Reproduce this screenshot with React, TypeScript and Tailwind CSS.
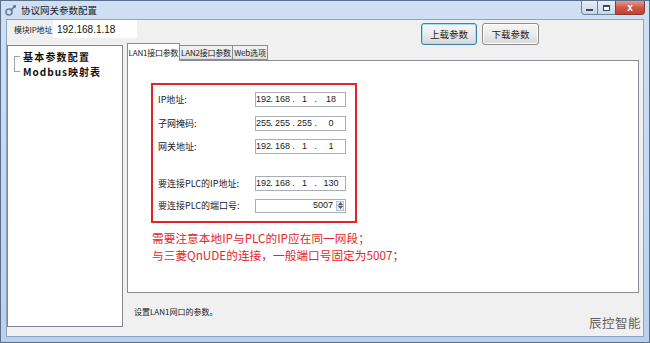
import React from "react";

const cjk = "font-['Noto_Sans_CJK_SC','Liberation_Sans',sans-serif]";

function IpBox({ parts }: { parts: string[] }) {
	const widths = ["w-[13px]", "w-[17px]", "w-[17px]", "w-[26px]"];
	return (
		<div className="flex h-[15px] w-[91px] items-center border border-[#abadb3] bg-white text-[9px] leading-none text-[#222] font-['Liberation_Sans',sans-serif]">
			{ parts.map((p, i) => (
				<React.Fragment key={ i }>
					<span className={ `${ widths[i] } text-center` }>{ p }</span>
					{ i < 3 && <span className="w-[5px] text-center">.</span> }
				</React.Fragment>
			)) }
		</div>
	);
}

function PortBox({ value }: { value: string }) {
	return (
		<div className="flex h-[14px] w-[91px] items-center border border-[#abadb3] bg-white text-[9px] leading-none text-[#222] font-['Liberation_Sans',sans-serif]">
			<span className="flex-1 pr-[3px] text-right">{ value }</span>
			<div className="mr-[1px] flex h-[10px] w-[8px] flex-col border border-[#b9c4d2] bg-[#e6edf6]">
				<div className="flex flex-1 items-center justify-center border-b border-[#b9c4d2]">
					<svg width="5" height="3" viewBox="0 0 5 3"><path d="M0 3 L2.5 0 L5 3Z" fill="#4d5a6b" /></svg>
				</div>
				<div className="flex flex-1 items-center justify-center">
					<svg width="5" height="3" viewBox="0 0 5 3"><path d="M0 0 L2.5 3 L5 0Z" fill="#4d5a6b" /></svg>
				</div>
			</div>
		</div>
	);
}

function Row({ label, children, className }: { label: string, children: React.ReactNode, className: string }) {
	return (
		<div className={ `flex h-[15px] items-center ${ className }` }>
			<span className="w-[97px] whitespace-nowrap text-[9px] text-[#222]">{ label }</span>
			{ children }
		</div>
	);
}

function WinButton({ label, focused }: { label: string, focused?: boolean }) {
	return (
		<button className={ `flex h-[22px] items-center justify-center rounded-[3px] border bg-gradient-to-b from-[#f6f6f6] via-[#ebebeb] to-[#d8d8d8] text-[9.5px] text-[#222] ${ focused ? "w-[56px] border-[#3c7fb1] shadow-[inset_0_0_0_1px_#a8dcf5]" : "w-[57px] border-[#8c8c8c] shadow-[inset_0_0_0_1px_#fcfcfc]" }` }>
			{ label }
		</button>
	);
}

function App() {
	return (
		<div className={ `relative flex h-[343px] w-[650px] flex-col overflow-hidden border border-[#5a6f8c] bg-gradient-to-b from-[#cfe0f4] to-[#b9d1ec] ${ cjk }` }>
			{/* title bar */}
			<div className="flex h-[18px] items-center pl-[4px]">
				<svg width="11" height="11" viewBox="0 0 11 11">
					<circle cx="4" cy="7" r="3" fill="none" stroke="#6a7f99" strokeWidth="1.6" />
					<path d="M5.5 5.5 L10 1" stroke="#5d6f86" strokeWidth="1.6" />
					<path d="M8 1 L10.5 0.5 L10 3" stroke="#5d6f86" strokeWidth="1" fill="none" />
				</svg>
				<span className="ml-[5px] text-[9.5px] text-[#1b1b1b]">协议网关参数配置</span>
				<div className="ml-auto mr-[4px] flex h-[14px] self-start">
					<div className="flex w-[17px] items-end justify-center rounded-bl-[4px] border border-t-0 border-[#6f829c] bg-gradient-to-b from-[#e8eff8] to-[#c6d6ea] pb-[3px]">
						<div className="h-[2px] w-[7px] border border-[#3a4a5e] bg-white" />
					</div>
					<div className="flex w-[17px] items-center justify-center border-b border-[#6f829c] bg-gradient-to-b from-[#e8eff8] to-[#c6d6ea]">
						<div className="h-[6px] w-[7px] border border-[#3a4a5e] border-t-2 bg-white" />
					</div>
					<div className="flex w-[30px] items-center justify-center rounded-br-[4px] border border-t-0 border-[#8a3a33] bg-gradient-to-b from-[#e39a8f] via-[#d0574a] to-[#c2402f] text-[10px] font-bold leading-none text-white font-['Liberation_Sans',sans-serif]">
						x
					</div>
				</div>
			</div>

			{/* client area */}
			<div className="mx-[5px] mb-[5px] flex flex-1 flex-col border border-[#8ea3bf] bg-[#f0f0f0]">
				<div className="flex h-[23px] items-start">
					<span className="ml-[7px] mt-[4px] w-[39px] whitespace-nowrap text-[8px] tracking-[-0.2px] text-[#222]">模块IP地址</span>
					<div className="flex h-[18px] w-[84px] items-center bg-white pl-[4px] text-[10px] text-[#111] font-['Liberation_Sans',sans-serif]">
						192.168.1.18
					</div>
					<div className="ml-auto mr-[104px] mt-[3px] flex gap-[5px]">
						<WinButton label="上载参数" focused />
						<WinButton label="下载参数" />
					</div>
				</div>

				<div className="flex flex-1">
					{/* tree */}
					<div className="mb-[9px] mt-[2px] w-[116px] border border-[#828790] bg-white">
						<div className="relative ml-[6px] mt-[3px]">
							<div className="absolute left-0 top-[7px] h-[16px] w-[6px] border-l border-t border-[#a0a0a0]" />
							<div className="absolute left-0 top-[22px] w-[6px] border-t border-[#a0a0a0]" />
							<div className="whitespace-nowrap pl-[9px] text-[10px] font-bold leading-[15px] tracking-[1.2px] text-[#111]">基本参数配置</div>
							<div className="whitespace-nowrap pl-[9px] text-[10px] font-bold leading-[15px] tracking-[1px] text-[#111]">Modbus映射表</div>
						</div>
					</div>

					{/* tabs */}
					<div className="ml-[4px] flex w-[512px] flex-col">
						<div className="flex h-[17px] items-end whitespace-nowrap text-[8px] leading-none tracking-[-0.2px] text-[#222]">
							<div className="relative z-10 -mb-px flex h-[18px] w-[53px] items-center justify-center border border-b-0 border-[#898c95] bg-white">LAN1接口参数</div>
							<div className="flex h-[15px] w-[53px] items-center justify-center border border-l-0 border-[#898c95] bg-gradient-to-b from-[#f2f2f2] to-[#e3e3e3]">LAN2接口参数</div>
							<div className="flex h-[15px] w-[35px] items-center justify-center border border-l-0 border-[#898c95] bg-gradient-to-b from-[#f2f2f2] to-[#e3e3e3]">Web选项</div>
						</div>
						<div className="h-[233px] border border-[#898c95] bg-white">
							<div className="ml-[23px] mt-[22px] h-[140px] w-[206px] border-2 border-[#e3232a] pl-[5px]">
								<Row label="IP地址:" className="mt-[7px]"><IpBox parts={ ["192", "168", "1", "18"] } /></Row>
								<Row label="子网掩码:" className="mt-[9px]"><IpBox parts={ ["255", "255", "255", "0"] } /></Row>
								<Row label="网关地址:" className="mt-[8px]"><IpBox parts={ ["192", "168", "1", "1"] } /></Row>
								<Row label="要连接PLC的IP地址:" className="mt-[22px]"><IpBox parts={ ["192", "168", "1", "130"] } /></Row>
								<Row label="要连接PLC的端口号:" className="mt-[7px]"><PortBox value="5007" /></Row>
							</div>
							<div className="ml-[24px] mt-[6px] whitespace-nowrap text-[11.7px] leading-[17px] text-[#e3262b]">
								<div>需要注意本地IP与PLC的IP应在同一网段；</div>
								<div>与三菱QnUDE的连接，一般端口号固定为5007；</div>
							</div>
						</div>
						<div className="whitespace-nowrap pl-[7px] pt-[13px] text-[8px] leading-[12px] text-[#222]">设置LAN1网口的参数。</div>
					</div>
				</div>
			</div>

			{/* watermark */}
			<div className="absolute left-[588px] top-[316px] text-[12.5px] leading-none tracking-[0.5px] text-[#3a3a3a] opacity-80">辰控智能</div>
		</div>
	);
}

export default App;
